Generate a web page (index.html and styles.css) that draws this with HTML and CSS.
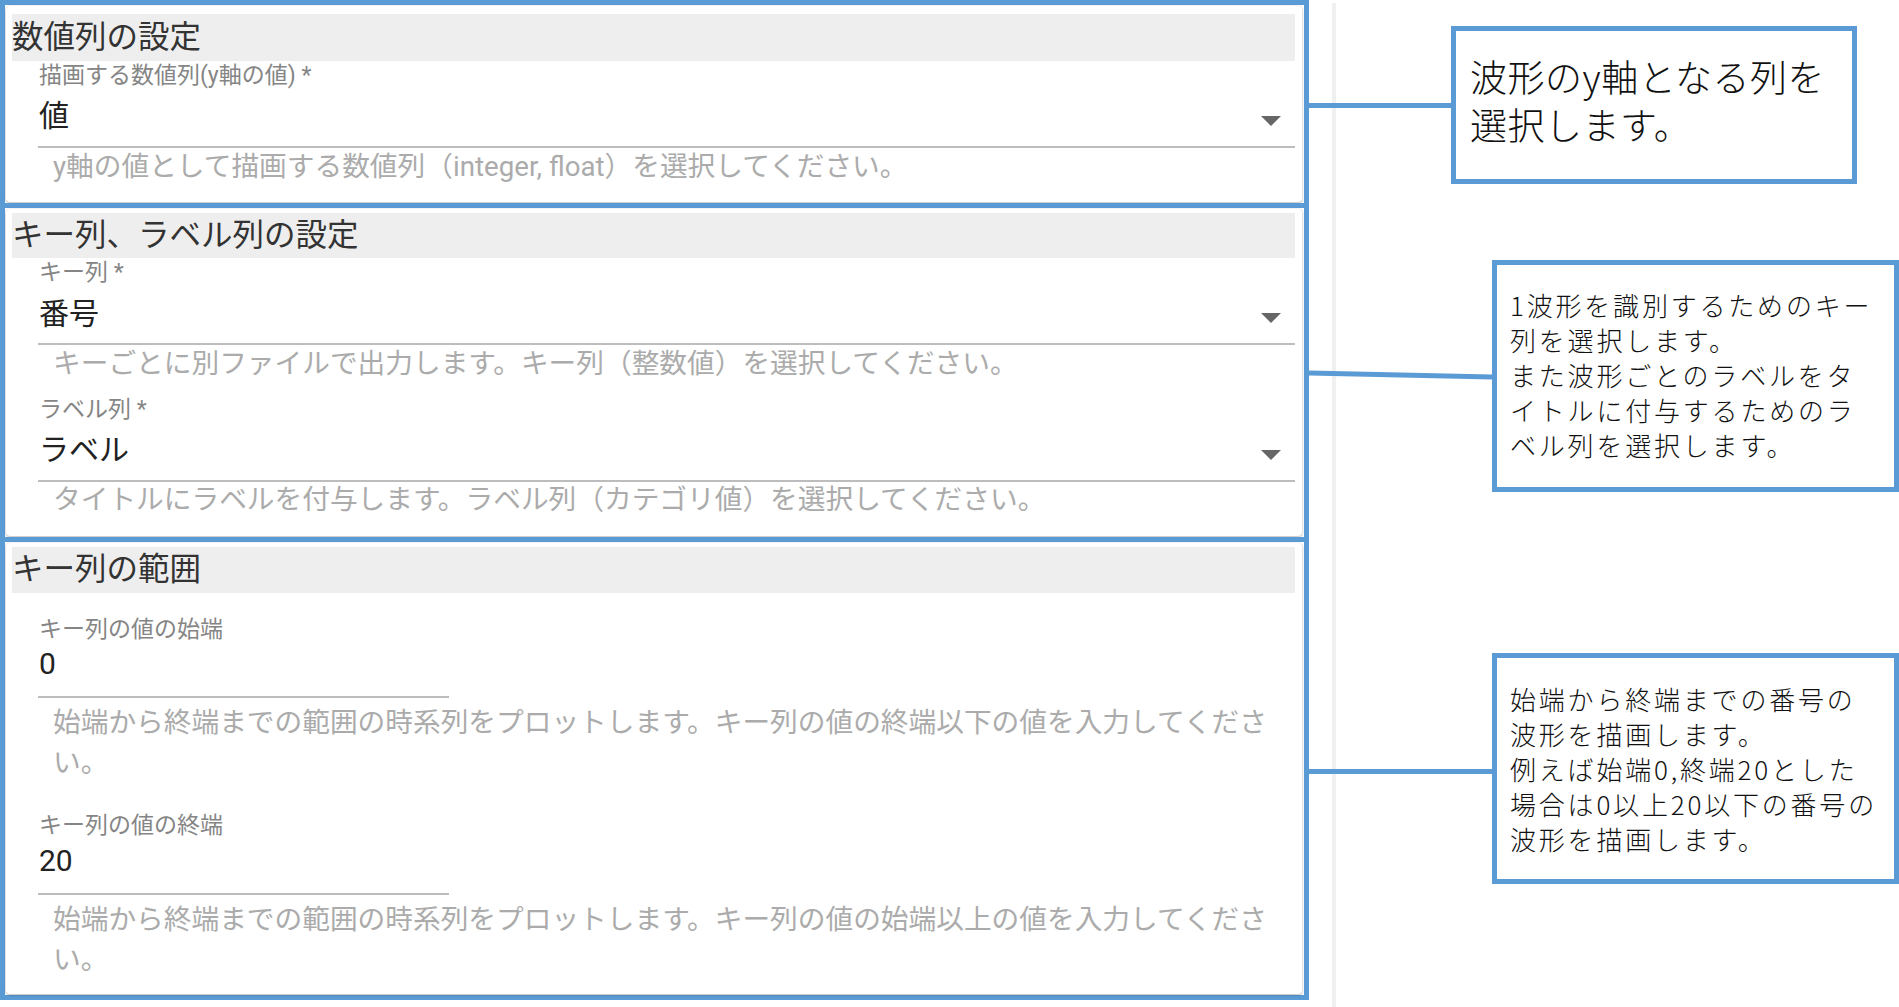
FILE: index.html
```html
<!DOCTYPE html>
<html lang="ja">
<head>
<meta charset="utf-8">
<title>設定</title>
<link rel="stylesheet" href="styles.css">
</head>
<body>
<div class="page">
  <div class="row row-1">
    <section class="sec sec-1">
      <div class="card">
        <div class="band">数値列の設定</div>
        <div class="field">
          <div class="label">描画する数値列(y軸の値) *</div>
          <div class="input input-select">
            <span class="value">値</span>
            <span class="arrow"></span>
          </div>
          <div class="help">y軸の値として描画する数値列（integer, float）を選択してください。</div>
        </div>
      </div>
    </section>
    <div class="connector conn-1"></div>
    <div class="callout callout-a">波形のy軸となる列を<br>選択します。</div>
  </div>

  <div class="row row-2">
    <section class="sec sec-2">
      <div class="card">
        <div class="band">キー列、ラベル列の設定</div>
        <div class="field">
          <div class="label">キー列 *</div>
          <div class="input input-select">
            <span class="value">番号</span>
            <span class="arrow"></span>
          </div>
          <div class="help">キーごとに別ファイルで出力します。キー列（整数値）を選択してください。</div>
        </div>
        <div class="field field-2">
          <div class="label">ラベル列 *</div>
          <div class="input input-select">
            <span class="value">ラベル</span>
            <span class="arrow"></span>
          </div>
          <div class="help">タイトルにラベルを付与します。ラベル列（カテゴリ値）を選択してください。</div>
        </div>
      </div>
    </section>
    <svg class="connector-svg" width="183" height="16" viewBox="0 0 183 16">
      <line x1="0" y1="6" x2="183" y2="10" stroke="#5b9bd5" stroke-width="5"/>
    </svg>
    <div class="callout callout-b">1波形を識別するためのキー<br>列を選択します。<br>また波形ごとのラベルをタ<br>イトルに付与するためのラ<br>ベル列を選択します。</div>
  </div>

  <div class="row row-3">
    <section class="sec sec-3">
      <div class="card">
        <div class="band">キー列の範囲</div>
        <div class="field">
          <div class="label">キー列の値の始端</div>
          <div class="input input-text">
            <span class="value">0</span>
          </div>
          <div class="help help-wrap">始端から終端までの範囲の時系列をプロットします。キー列の値の終端以下の値を入力してください。</div>
        </div>
        <div class="field field-3b">
          <div class="label">キー列の値の終端</div>
          <div class="input input-text">
            <span class="value">20</span>
          </div>
          <div class="help help-wrap">始端から終端までの範囲の時系列をプロットします。キー列の値の始端以上の値を入力してください。</div>
        </div>
      </div>
    </section>
    <div class="connector conn-3"></div>
    <div class="callout callout-c">始端から終端までの番号の<br>波形を描画します。<br>例えば始端0,終端20とした<br>場合は0以上20以下の番号の<br>波形を描画します。</div>
  </div>
</div>
</body>
</html>
```

FILE: styles.css
```css
* { box-sizing: border-box; }

html, body {
  margin: 0;
  padding: 0;
  background: #ffffff;
}

body {
  width: 1899px;
  height: 1007px;
  overflow: hidden;
  font-family: Roboto, "Noto Sans CJK JP", sans-serif;
}

.page {
  width: 1899px;
  height: 1007px;
  background-image: linear-gradient(#f0f0f0, #f0f0f0);
  background-repeat: no-repeat;
  background-position: 1332px 3px;
  background-size: 4px 1004px;
}

.row {
  display: flex;
  align-items: center;
}

.row + .row {
  margin-top: -5px;
}

/* form sections */
.sec {
  flex: none;
  width: 1309px;
  border: 5px solid #5b9bd5;
  padding: 1px 2px 1px 1px;
  background: #ffffff;
}

.card {
  background: #ffffff;
  border-radius: 4px;
  box-shadow: 0 1px 3px rgba(0, 0, 0, 0.28), 0 0 1px rgba(0, 0, 0, 0.12);
  padding: 8px 7px 19px 6px;
}

.sec-2 .card { padding-top: 4px; padding-bottom: 20px; }
.sec-3 .card { padding-top: 4px; padding-bottom: 14px; }

.band {
  height: 47px;
  line-height: 47px;
  background: #eeeeee;
  color: #333333;
  font-size: 31.5px;
  white-space: nowrap;
}

.sec-2 .band { height: 45px; line-height: 45px; }
.sec-3 .band { height: 46px; line-height: 46px; }

.field {
  padding-left: 26px;
}

.label {
  margin-top: 2px;
  margin-left: 1px;
  height: 26px;
  line-height: 26px;
  font-size: 23px;
  color: #858585;
  white-space: nowrap;
}

.input {
  display: flex;
  justify-content: space-between;
  align-items: flex-start;
  height: 59px;
  border-bottom: 2px solid #bdbdbd;
}

.value {
  display: block;
  line-height: 36px;
  font-size: 30px;
  color: #222222;
  padding-top: 8px;
  margin-left: 1px;
}

.sec-1 .input { height: 59px; }
.sec-1 .value { padding-top: 9px; }
.sec-2 .field .value { padding-top: 10px; }
.sec-2 .field-2 .value { padding-top: 9px; }

.arrow {
  align-self: flex-end;
  width: 0;
  height: 0;
  margin-right: 14px;
  margin-bottom: 20px;
  border-left: 10px solid transparent;
  border-right: 10px solid transparent;
  border-top: 10px solid #666666;
}

.help {
  padding-left: 15px;
  font-size: 27.7px;
  line-height: 32px;
  color: #ababab;
  margin-top: 3px;
  white-space: nowrap;
}

.sec-2 .help { margin-top: 3px; }
.sec-2 .field-2 .label { margin-top: 17px; }
.sec-2 .field-2 .help { margin-top: 2px; }

/* range fields */
.sec-3 .label { margin-top: 24px; }
.sec-3 .field-3b .label { margin-top: 30px; }

.input-text {
  width: 411px;
  height: 55px;
}

.sec-3 .value { padding-top: 3px; }
.sec-3 .field-3b .input-text { height: 56px; }
.sec-3 .field-3b .value { padding-top: 4px; }

.help-wrap {
  margin-top: 5px;
  line-height: 40px;
  white-space: normal;
}

/* connectors */
.connector {
  flex: none;
  height: 5px;
  background: #5b9bd5;
}

.conn-1 { width: 142px; margin-top: 3px; }
.conn-3 { width: 183px; margin-top: 6px; }

.connector-svg {
  flex: none;
  display: block;
  margin-top: 4px;
}

/* callouts */
.callout {
  flex: none;
  border: 5px solid #5b9bd5;
  background: #ffffff;
  color: #111111;
  font-family: "Noto Sans CJK JP", sans-serif;
  font-weight: 300;
  white-space: nowrap;
}

.callout-a {
  width: 406px;
  height: 158px;
  margin-top: 2px;
  padding: 21px 0 0 14px;
  font-size: 37px;
  line-height: 48px;
  letter-spacing: 0.5px;
}

.callout-b,
.callout-c {
  width: 407px;
  height: 232px;
  padding: 22px 0 0 13px;
  font-size: 26px;
  line-height: 35px;
  letter-spacing: 2.8px;
}

.callout-b { margin-top: 6px; }
.callout-c { height: 231px; padding-top: 23px; }
```
